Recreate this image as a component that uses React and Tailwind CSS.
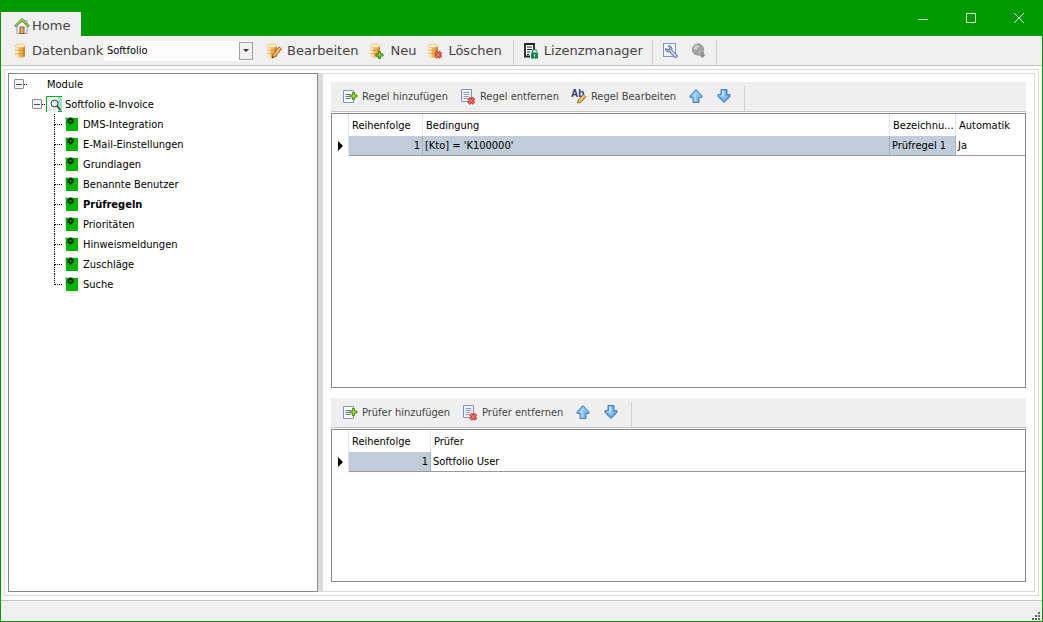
import React, { useState } from 'react';

const modules = [
  'DMS-Integration',
  'E-Mail-Einstellungen',
  'Grundlagen',
  'Benannte Benutzer',
  'Prüfregeln',
  'Prioritäten',
  'Hinweismeldungen',
  'Zuschläge',
  'Suche',
];

/* ---------- Icons ---------- */

const HomeIcon = () => (
  <svg width="16" height="16" viewBox="0 0 16 16" aria-hidden="true">
    <path d="M3 8v7.5h10V8L8 3z" fill="#f4f6fa" stroke="#8c9bb5" />
    <rect x="11" y="2" width="2" height="4" fill="#dfe5ee" stroke="#8c9bb5" strokeWidth=".6" />
    <path d="M1 8.600 8 1.800l7 6.800" fill="none" stroke="#4f8a1c" strokeWidth="2.600" />
    <path d="M1.200 8.400 8 1.800l6.800 6.600" fill="none" stroke="#a9d873" strokeWidth="1.200" />
    <rect x="6" y="9" width="4" height="6.500" fill="#e8a860" stroke="#9a5a20" />
  </svg>
);

const DatabaseShape = () => (
  <>
    <path d="M1 3v10c0 2 10 2 10 0V3z" fill="#f0b455" />
    <path d="M1 3v10c.6.8 1.800 1.200 3.500 1.400V3z" fill="#fdebc4" />
    <path d="M8.500 3v11.300c1.500-.3 2.500-.7 2.500-1.300V3z" fill="#cd8a30" />
    <ellipse cx="6" cy="2.800" rx="5" ry="1.800" fill="#fdf0cf" stroke="#e2b060" strokeWidth=".6" />
    <path d="M1 6.300c1 1.500 9 1.500 10 0M1 9.800c1 1.500 9 1.500 10 0" fill="none" stroke="#cc8a35" strokeWidth=".6" />
  </>
);

const DatabaseIcon = () => (
  <svg width="16" height="16" viewBox="-1 0 16 16" aria-hidden="true">
    <DatabaseShape />
  </svg>
);

const DatabaseEditIcon = () => (
  <svg width="16" height="16" viewBox="0 0 16 16" aria-hidden="true">
    <DatabaseShape />
    <path d="m6 15 1-3.500L13 4l2.500 2L9.500 13.500z" fill="#f0a040" stroke="#94531a" strokeWidth=".8" />
    <path d="m8 12.500 6-7.500" stroke="#ffe0a0" />
    <path d="m6 15 .5-2 1.300 1.200z" fill="#333" />
  </svg>
);

const DatabaseAddIcon = () => (
  <svg width="16" height="16" viewBox="0 0 16 16" aria-hidden="true">
    <DatabaseShape />
    <path d="M9.500 8.500h2v2.500h2.500v2h-2.500v2.500h-2V13H7v-2h2.500z" fill="#8ccc3c" stroke="#3f7d16" />
  </svg>
);

const CrossMark = () => (
  <>
    <path d="m8.500 9 5.500 5.500M14 9l-5.500 5.500" stroke="#b5352b" strokeWidth="3.600" />
    <path d="m8.500 9 5.500 5.500M14 9l-5.500 5.500" stroke="#ee7768" strokeWidth="1.600" />
  </>
);

const DatabaseDeleteIcon = () => (
  <svg width="16" height="16" viewBox="0 0 16 16" aria-hidden="true">
    <DatabaseShape />
    <CrossMark />
  </svg>
);

const LicenseIcon = () => (
  <svg width="16" height="16" viewBox="0 0 16 16" aria-hidden="true">
    <path d="M7 13.500H2V1h9v6" fill="#fff" stroke="#222" strokeWidth="1.800" />
    <path d="M4 4h5M4 6.500h5M4 9h3M4 11.500h2" stroke="#222" />
    <rect x="8" y="9.500" width="7" height="6" fill="#138a43" />
    <path d="M9.500 10V8c0-2 4-2 4 0v.5" fill="none" stroke="#138a43" strokeWidth="1.200" />
    <path d="M11.500 11.500v2" stroke="#fff" strokeWidth="1.200" />
  </svg>
);

const ToolsIcon = () => (
  <svg width="16" height="16" viewBox="0 0 16 16" aria-hidden="true">
    <rect x="1.500" y=".5" width="12" height="13" fill="#f4f7fd" stroke="#7f95c4" />
    <path
      d="M3.500 5.500c-.2 2.600 2.200 4 4.400 3.300l4.600 5.400c1.400 1.400 3.600-.4 2.400-2L9.800 7.500C10.600 4.800 9 2.600 6.500 2.800l1.300 1.700-.3 1.700-1.700.6z"
      fill="#b9c9e4"
      stroke="#4c6390"
    />
    <path d="m9 8 4.500 5" stroke="#eef3fb" />
  </svg>
);

const GlobeIcon = () => (
  <svg width="16" height="16" viewBox="0 0 16 16" aria-hidden="true">
    <circle cx="7" cy="6.500" r="5.700" fill="#a2a2a2" stroke="#8d8d8d" strokeWidth=".7" />
    <path d="M3 4c1.500-2 4-2.500 5-1.500S6.500 5 6 6.500 3.500 7 3 6z" fill="#cdcdcd" />
    <path d="M8 8c1.500-1 3-.5 3.500.5S9 11 8 10.500z" fill="#bdbdbd" />
    <path d="M9 8.500h4v3.200h2L11.500 15 8 11.700h1z" fill="#8f8f8f" stroke="#d0d0d0" strokeWidth=".4" />
  </svg>
);

const SheetAddIcon = () => (
  <svg width="16" height="16" viewBox="0 0 16 16" aria-hidden="true">
    <path d="M1.500 1.500h10v12h-10z" fill="#f7f9fd" stroke="#8494ba" />
    <path d="M3.500 5.500h5M3.500 7.500h4M3.500 9.500h5" stroke="#5f7196" />
    <path d="M10.500 3.500h2V6H15v2h-2.500v2.500h-2V8H8V6h2.500z" fill="#a0dc3c" stroke="#4a8c14" />
  </svg>
);

const SheetDeleteIcon = () => (
  <svg width="16" height="16" viewBox="0 0 16 16" aria-hidden="true">
    <path d="M1.500.5h10v12h-10z" fill="#f1f5fc" stroke="#7f90ba" />
    <path d="M3.500 3.500h6M3.500 5.500h6M3.500 7.500h5M3.500 9.500h4" stroke="#8c9dc4" />
    <CrossMark />
  </svg>
);

const RenameIcon = () => (
  <svg width="16" height="16" viewBox="0 0 16 16" aria-hidden="true">
    <text x="0" y="8" fontSize="10" fontWeight="700" fill="#223a78" fontFamily="Liberation Sans, Arial, sans-serif">
      Ab
    </text>
    <path d="m6.500 14 .8-3L12.500 5.500l2.500 2.200-5 5.500z" fill="#f2b04c" stroke="#8f5a1c" strokeWidth=".8" />
    <path d="m8.500 11.500 4.800-5" stroke="#ffe6ae" />
  </svg>
);

const ArrowUpIcon = () => (
  <svg width="16" height="16" viewBox="0 0 16 16" aria-hidden="true">
    <path d="M8 .5 14 7v1.500h-3V13.500H5V8.500H2V7z" fill="#6fb4ea" stroke="#4a7fb8" strokeLinejoin="round" />
    <path d="M8 2.300 12.500 7.400H10v5H6v-5H3.500z" fill="#a9d6f6" />
    <path d="M8.500 5v7.400H10v-5h2z" fill="#6fb4ea" />
  </svg>
);

const ArrowDownIcon = () => (
  <svg width="16" height="16" viewBox="0 0 16 16" aria-hidden="true">
    <path d="M8 13.500 14 7.500V5.500h-3v-5H5v5H2v2z" fill="#4d9adb" stroke="#4a7fb8" strokeLinejoin="round" />
    <path d="M6 1.500h4v5h3L8 11.700 3 6.500h3z" fill="#7fc0ee" />
    <path d="M6 1.500h2v6H4L3 6.500h3z" fill="#c2e4fa" />
  </svg>
);

const ModuleIcon = () => (
  <svg width="14" height="14" viewBox="0 0 14 14" className="shrink-0" aria-hidden="true">
    <path d="M1 1h12v13H1z" fill="#00b400" />
    <path d="M0 0h9v1H1v8H0z" fill="#b9dcb9" />
    <circle cx="5.500" cy="4" r="2" fill="none" stroke="#062806" strokeWidth="1.800" />
    <path d="M5.500.5v1.500M5.500 6v1.500M2.500 2.300l1 .6M7.500 5.100l1 .6M2.500 5.700l1-.6M7.500 2.900l1-.6" stroke="#062806" strokeWidth="1.500" />
  </svg>
);

const InvoiceIcon = () => (
  <svg width="16" height="16" viewBox="0 0 16 16" className="shrink-0" aria-hidden="true">
    <path d="M0 0h16v16H0z" fill="#fafafa" />
    <path d="M12 1h4v14h-4z" fill="#a5dcc8" />
    <path d="M.5 16V.5H16M12 15.500h4" fill="none" stroke="#00b01c" />
    <path d="M2 14h3M3 12h2M7 14h3" stroke="#c8c8c8" />
    <circle cx="8.500" cy="7.500" r="3.500" fill="#d9eef0" stroke="#2b3c3c" />
    <path d="m11 10 3.500 4" stroke="#26443f" strokeWidth="1.500" />
  </svg>
);

/* ---------- Building blocks ---------- */

const Separator = () => <span className="w-px self-stretch bg-[#cfcfcf]" />;

const MainButton = ({ icon, children, label }) => (
  <button type="button" aria-label={label} className="flex items-center gap-[5px] whitespace-nowrap">
    {icon}
    {children}
  </button>
);

const Toolbar = ({ children }) => (
  <div className="flex h-[30px] shrink-0 items-center gap-3 border-b border-[#c4c4c4] bg-[#efefef] pt-1 pl-[11px] text-[#444]">
    {children}
  </div>
);

const ToolButton = ({ icon, children, label }) => (
  <button type="button" aria-label={label} className="-mt-1 flex items-center gap-1 whitespace-nowrap">
    {icon}
    {children}
  </button>
);

const Expander = () => (
  <button
    type="button"
    aria-label="Reduzieren"
    className="flex h-[10px] w-[10px] shrink-0 items-center justify-center rounded-[1px] border border-[#8e8e8e] bg-[#f2f2f2]"
  >
    <span className="h-px w-[6px] bg-[#2f4f9f]" />
  </button>
);

const HeadCell = ({ children }) => (
  <th className="h-[22px] truncate border-r border-[#e4e4e4] pt-px pl-[3px] text-left font-normal last:border-r-0">
    {children}
  </th>
);

const Cell = ({ selected, right, children }) => (
  <td
    className={`h-[20px] truncate border-r border-b border-b-[#9a9a9a] px-[2px] last:border-r-0 ${
      selected ? 'border-r-[#a9b1ba] bg-[#c0ccd9]' : 'border-r-[#e4e4e4]'
    } ${right ? 'text-right' : 'text-left'}`}
  >
    {children}
  </td>
);

const RowMarker = () => (
  <td className="border-r border-[#e4e4e4] pl-[6px]">
    <svg width="5" height="10" viewBox="0 0 5 10" className="block" aria-hidden="true">
      <path d="M0 0v10l5-5z" fill="#000" />
    </svg>
  </td>
);

const GridFrame = ({ children }) => (
  <div className="mt-px min-h-0 flex-1 overflow-hidden border border-[#828790] bg-white">
    <table className="w-full table-fixed border-separate border-spacing-0">{children}</table>
  </div>
);

const ModuleTree = ({ active, onSelect }) => (
  <nav className="w-[310px] shrink-0 overflow-hidden border border-[#828790] bg-white pl-[5px]">
    <div className="flex h-5 items-center">
      <Expander />
      <span className="w-[3px] border-t border-dotted border-black" />
      <span className="pt-[2px] pl-5">Module</span>
    </div>
    <div className="flex h-5 items-center pl-[18px]">
      <Expander />
      <span className="w-[3px] border-t border-dotted border-black" />
      <span className="flex items-center gap-[3px] pl-px">
        <InvoiceIcon />
        <span className="pt-[2px]">Softfolio e-Invoice</span>
      </span>
    </div>
    <ul className="pl-10">
      {modules.map((name, index) => (
        <li key={name} className="flex h-5 items-center">
          <span className="flex h-5 w-2 shrink-0 flex-col">
            <span className="h-[11px] border-b border-l border-dotted border-black" />
            {index < modules.length - 1 && <span className="flex-1 border-l border-dotted border-black" />}
          </span>
          <button
            type="button"
            onClick={() => onSelect(name)}
            className={`flex items-center gap-1 pl-[3px] ${active === name ? 'font-bold' : ''}`}
          >
            <ModuleIcon />
            <span className="pt-[2px]">{name}</span>
          </button>
        </li>
      ))}
    </ul>
  </nav>
);

export default function App() {
  const [active, setActive] = useState('Prüfregeln');

  return (
    <div className="flex h-screen flex-col border border-t-0 border-[#009900] bg-white font-[family-name:DejaVu_Sans_Condensed,Tahoma,sans-serif] text-[11px] leading-[14px] text-black">
      {/* Title bar */}
      <header className="flex h-9 shrink-0 items-end justify-between bg-[#009900]">
        <button
          type="button"
          className="flex h-6 w-20 items-center gap-[2px] bg-[#f0f0f0] pt-[3px] pl-[13px] font-[family-name:DejaVu_Sans,Verdana,sans-serif] text-[13px] text-[#444]"
        >
          <HomeIcon />
          Home
        </button>
        <div className="flex h-9 items-center gap-8 pr-[15px] text-[#d5ecd5]">
          <button type="button" aria-label="Minimieren" className="p-[3px]">
            <svg width="10" height="10" viewBox="0 0 10 10"><path d="M0 6.500h10" stroke="currentColor" /></svg>
          </button>
          <button type="button" aria-label="Maximieren" className="p-[3px]">
            <svg width="10" height="10" viewBox="0 0 10 10"><path d="M.5.5h9v9h-9z" fill="none" stroke="currentColor" /></svg>
          </button>
          <button type="button" aria-label="Schließen" className="p-[3px]">
            <svg width="10" height="10" viewBox="0 0 10 10"><path d="m0 0 10 10M10 0 0 10" stroke="currentColor" /></svg>
          </button>
        </div>
      </header>

      {/* Main toolbar */}
      <div className="flex h-[30px] shrink-0 items-center gap-[11px] border-b border-[#c4c4c4] bg-[#f0f0f0] pl-3 font-[family-name:DejaVu_Sans,Verdana,sans-serif] text-[13px] text-[#444]">
        <div className="mr-[2px] flex items-center">
          <DatabaseIcon />
          <label htmlFor="database" className="w-[75px] pl-[3px]">Datenbank</label>
          <div className="relative h-5 w-[149px] bg-[#fdfdfd]">
            <select
              id="database"
              className="h-5 w-full appearance-none bg-transparent pl-[3px] font-[family-name:DejaVu_Sans_Condensed,Tahoma,sans-serif] text-[11px] text-black outline-none"
            >
              <option>Softfolio</option>
            </select>
            <span className="pointer-events-none absolute top-px right-0 flex h-[18px] w-[14px] items-center justify-center border border-[#a0a0a0] bg-[#f2f2f2]">
              <svg width="6" height="3" viewBox="0 0 6 3"><path d="M0 0h6L3 3z" fill="#333" /></svg>
            </span>
          </div>
        </div>
        <MainButton icon={<DatabaseEditIcon />}>Bearbeiten</MainButton>
        <MainButton icon={<DatabaseAddIcon />}>Neu</MainButton>
        <MainButton icon={<DatabaseDeleteIcon />}>Löschen</MainButton>
        <div className="flex items-center gap-[9px] self-stretch pt-1">
          <Separator />
          <div className="-mt-1"><MainButton icon={<LicenseIcon />}>Lizenzmanager</MainButton></div>
          <Separator />
          <div className="-mt-1 flex gap-[13px]">
            <MainButton label="Einstellungen" icon={<ToolsIcon />} />
            <MainButton label="Sprache" icon={<GlobeIcon />} />
          </div>
          <Separator />
        </div>
      </div>

      {/* Workspace */}
      <main className="mx-[3px] mt-[3px] mb-1 flex min-h-0 flex-1 border border-[#dcdcdc] p-[3px]">
        <ModuleTree active={active} onSelect={setActive} />
        <div className="w-[5px] shrink-0 bg-[#dcdadc]" />
        <div className="flex min-w-0 flex-1 flex-col gap-[10px] border border-l-0 border-[#dcdcdc] p-2 pb-[9px]">
          <section className="flex min-h-0 flex-[5] flex-col">
            <Toolbar>
              <ToolButton icon={<SheetAddIcon />}>Regel hinzufügen</ToolButton>
              <ToolButton icon={<SheetDeleteIcon />}>Regel entfernen</ToolButton>
              <ToolButton icon={<RenameIcon />}>Regel Bearbeiten</ToolButton>
              <ToolButton label="Nach oben" icon={<ArrowUpIcon />} />
              <ToolButton label="Nach unten" icon={<ArrowDownIcon />} />
              <Separator />
            </Toolbar>
            <GridFrame>
              <colgroup>
                <col className="w-[17px]" />
                <col className="w-[74px]" />
                <col />
                <col className="w-[66px]" />
                <col className="w-[69px]" />
              </colgroup>
              <thead>
                <tr>
                  <HeadCell />
                  <HeadCell>Reihenfolge</HeadCell>
                  <HeadCell>Bedingung</HeadCell>
                  <HeadCell>Bezeichnu...</HeadCell>
                  <HeadCell>Automatik</HeadCell>
                </tr>
              </thead>
              <tbody>
                <tr>
                  <RowMarker />
                  <Cell selected right>1</Cell>
                  <Cell selected>[Kto] = 'K100000'</Cell>
                  <Cell selected>Prüfregel 1</Cell>
                  <Cell>Ja</Cell>
                </tr>
              </tbody>
            </GridFrame>
          </section>

          <section className="flex min-h-0 flex-[3] flex-col">
            <Toolbar>
              <ToolButton icon={<SheetAddIcon />}>Prüfer hinzufügen</ToolButton>
              <ToolButton icon={<SheetDeleteIcon />}>Prüfer entfernen</ToolButton>
              <ToolButton label="Nach oben" icon={<ArrowUpIcon />} />
              <ToolButton label="Nach unten" icon={<ArrowDownIcon />} />
              <Separator />
            </Toolbar>
            <GridFrame>
              <colgroup>
                <col className="w-[17px]" />
                <col className="w-[82px]" />
                <col />
              </colgroup>
              <thead>
                <tr>
                  <HeadCell />
                  <HeadCell>Reihenfolge</HeadCell>
                  <HeadCell>Prüfer</HeadCell>
                </tr>
              </thead>
              <tbody>
                <tr>
                  <RowMarker />
                  <Cell selected right>1</Cell>
                  <Cell>Softfolio User</Cell>
                </tr>
              </tbody>
            </GridFrame>
          </section>
        </div>
      </main>

      {/* Status bar */}
      <footer className="flex h-[21px] shrink-0 items-end justify-end border-t border-[#c4c4c4] bg-[#f0f0f0] p-px pr-[2px]">
        <svg width="8" height="8" viewBox="0 0 8 8" aria-hidden="true">
          <path d="M6 0h2v2H6zM3 3h2v2H3zM6 3h2v2H6zM0 6h2v2H0zM3 6h2v2H3zM6 6h2v2H6z" fill="#666" />
        </svg>
      </footer>
    </div>
  );
}
